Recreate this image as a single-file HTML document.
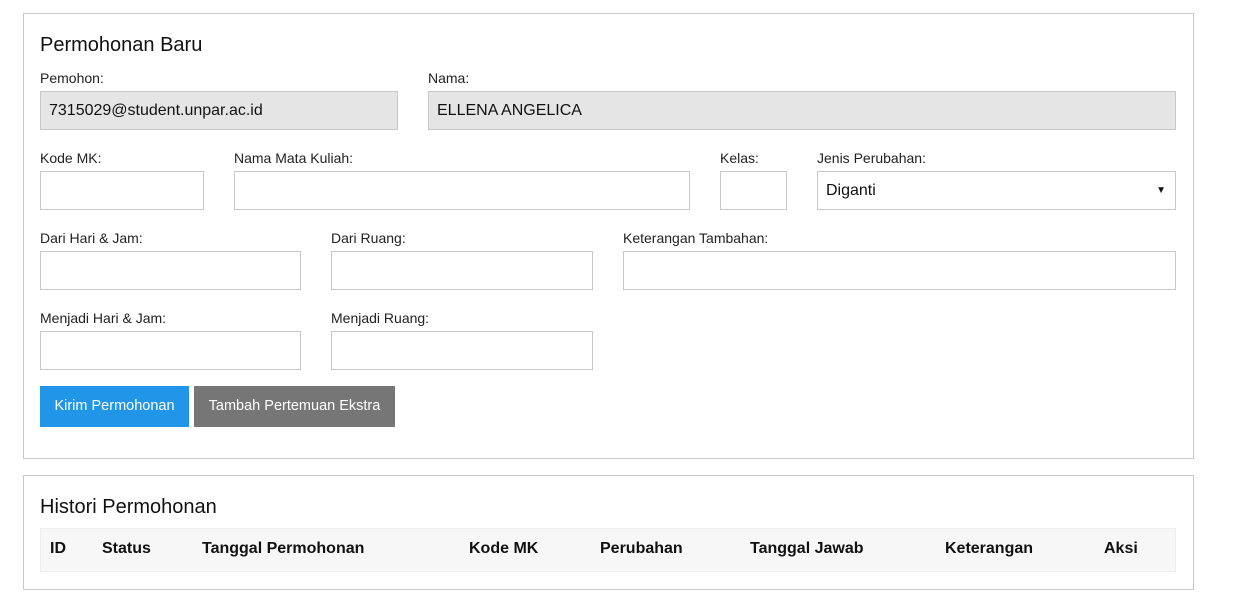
<!DOCTYPE html>
<html><head><meta charset="utf-8"><style>
body{margin:0;width:1241px;height:601px;background:#fff;font-family:"Liberation Sans",sans-serif;color:#111;position:relative;overflow:hidden}
.a{position:absolute}
.card{border:1px solid #c8c8c8;background:#fff}
.lbl{font-size:14px;color:#222}
.in{border:1px solid #c8c8c8;background:#fff;box-sizing:border-box}
.ro{background:#e5e5e5;font-size:16px;padding-left:8px;line-height:38px}
h2{margin:0;font-weight:normal;font-size:20px;color:#111}
.btn{color:#fff;font-size:14.5px;text-align:center;line-height:41px}
.th{font-weight:bold;font-size:16px;top:540px}
</style></head><body>
<div class="a card" style="left:23px;top:13px;width:1169px;height:444px"></div>
<h2 class="a" style="left:40px;top:34px">Permohonan Baru</h2>
<div class="a lbl" style="left:40px;top:70px">Pemohon:</div>
<div class="a lbl" style="left:428px;top:70px">Nama:</div>
<div class="a in ro" style="left:40px;top:91px;width:358px;height:39px">7315029@student.unpar.ac.id</div>
<div class="a in ro" style="left:428px;top:91px;width:748px;height:39px">ELLENA ANGELICA</div>
<div class="a lbl" style="left:40px;top:150px">Kode MK:</div>
<div class="a lbl" style="left:234px;top:150px">Nama Mata Kuliah:</div>
<div class="a lbl" style="left:720px;top:150px">Kelas:</div>
<div class="a lbl" style="left:817px;top:150px">Jenis Perubahan:</div>
<div class="a in" style="left:40px;top:171px;width:164px;height:39px"></div>
<div class="a in" style="left:234px;top:171px;width:456px;height:39px"></div>
<div class="a in" style="left:720px;top:171px;width:67px;height:39px"></div>
<div class="a in" style="left:817px;top:171px;width:359px;height:39px;font-size:16px;line-height:38px;padding-left:8px">Diganti<span style="position:absolute;right:9px;top:0;font-size:10px">&#9660;</span></div>
<div class="a lbl" style="left:40px;top:230px">Dari Hari &amp; Jam:</div>
<div class="a lbl" style="left:331px;top:230px">Dari Ruang:</div>
<div class="a lbl" style="left:623px;top:230px">Keterangan Tambahan:</div>
<div class="a in" style="left:40px;top:251px;width:261px;height:39px"></div>
<div class="a in" style="left:331px;top:251px;width:262px;height:39px"></div>
<div class="a in" style="left:623px;top:251px;width:553px;height:39px"></div>
<div class="a lbl" style="left:40px;top:310px">Menjadi Hari &amp; Jam:</div>
<div class="a lbl" style="left:331px;top:310px">Menjadi Ruang:</div>
<div class="a in" style="left:40px;top:331px;width:261px;height:39px"></div>
<div class="a in" style="left:331px;top:331px;width:262px;height:39px"></div>
<div class="a btn" style="left:40px;top:386px;width:149px;height:41px;background:#2196e8">Kirim Permohonan</div>
<div class="a btn" style="left:194px;top:386px;width:201px;height:41px;background:#767676">Tambah Pertemuan Ekstra</div>
<div class="a card" style="left:23px;top:475px;width:1169px;height:113px"></div>
<h2 class="a" style="left:40px;top:496px">Histori Permohonan</h2>
<div class="a" style="left:40px;top:528px;width:1136px;height:44px;background:#f7f7f7;border:1px solid #eee;box-sizing:border-box"></div>
<div class="a th" style="left:50px">ID</div>
<div class="a th" style="left:102px">Status</div>
<div class="a th" style="left:202px">Tanggal Permohonan</div>
<div class="a th" style="left:469px">Kode MK</div>
<div class="a th" style="left:600px">Perubahan</div>
<div class="a th" style="left:750px">Tanggal Jawab</div>
<div class="a th" style="left:945px">Keterangan</div>
<div class="a th" style="left:1104px">Aksi</div>
</body></html>
